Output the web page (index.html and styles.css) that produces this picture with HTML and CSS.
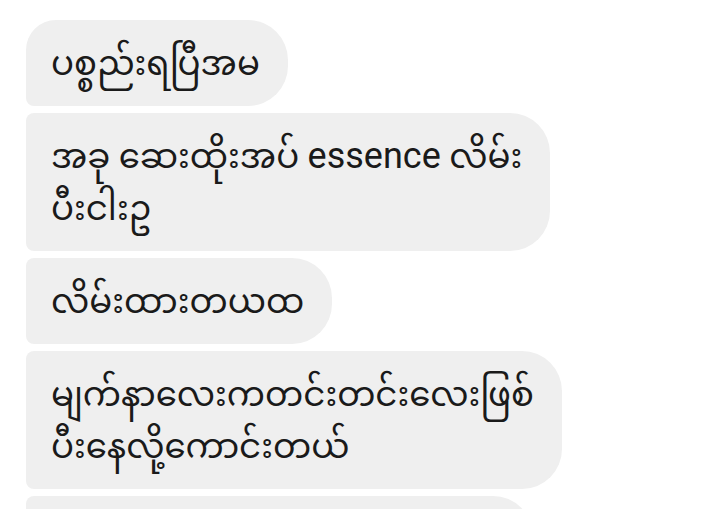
FILE: index.html
```html
<!DOCTYPE html>
<html lang="my">
<head>
<meta charset="utf-8">
<link rel="stylesheet" href="styles.css">
</head>
<body>
<div class="thread">
  <div class="bubble first">ပစ္စည်းရပြီအမ</div>
  <div class="bubble">အခု ဆေးထိုးအပ် <span class="latin">essence</span> လိမ်း<br>ပီးငါးဥ</div>
  <div class="bubble">လိမ်းထားတယထ</div>
  <div class="bubble">မျက်နာလေးကတင်းတင်းလေးဖြစ်<br>ပီးနေလို့ကောင်းတယ်</div>
  <div class="bubble">ဒီတစ်ခါလည်းထပ်မှာဦးမယ်နော်</div>
</div>
</body>
</html>
```

FILE: styles.css
```css
html, body {
  margin: 0;
  padding: 0;
  background: #ffffff;
}
body {
  width: 720px;
  height: 509px;
  overflow: hidden;
  font-family: Roboto, "Noto Sans Myanmar", Padauk, "Myanmar Text", "Noto Sans", sans-serif;
  color: #1a1a1a;
}
.thread {
  display: flex;
  flex-direction: column;
  align-items: flex-start;
  gap: 7px;
  padding: 20px 0 0 26px;
}
.bubble {
  background: #efefef;
  font-size: 34px;
  line-height: 52px;
  padding: 17px 28px 17px 25px;
  border-radius: 8px 40px 40px 8px;
  white-space: nowrap;
}
.bubble.first {
  border-top-left-radius: 30px;
}
.latin {
  font-size: 36px;
}
```
